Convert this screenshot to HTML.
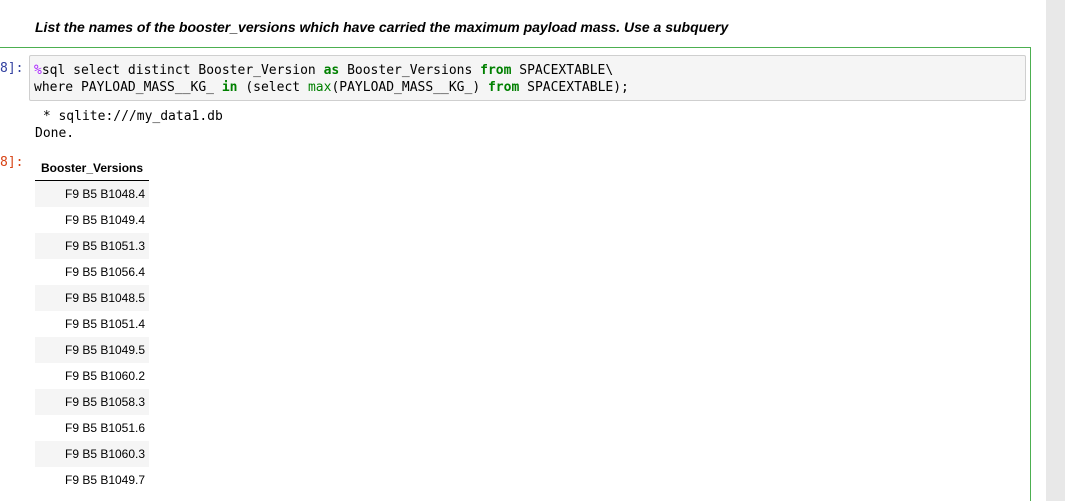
<!DOCTYPE html>
<html style="overflow:hidden;height:501px"><head><style>
body{margin:0;width:1065px;height:501px;overflow:hidden;background:#fff;font-family:"Liberation Sans",Arial,sans-serif;position:relative}
.sb{position:absolute;left:1046px;top:0;width:19px;height:501px;background:#e8e8e8}
.title{position:absolute;left:35px;top:19px;font-size:14px;font-weight:bold;font-style:italic;color:#000}
.gt{position:absolute;left:0;top:47px;width:1031px;height:1px;background:#4caf50}
.gr{position:absolute;left:1030px;top:47px;width:1px;height:454px;background:#4caf50}
.prompt{position:absolute;left:0;font-family:"DejaVu Sans Mono","Liberation Mono",monospace;font-size:13px}
.code{position:absolute;left:29px;top:55px;width:995px;height:44px;background:#f5f5f5;border:1px solid #cfcfcf;border-radius:2px}
.mono{font-family:"DejaVu Sans Mono","Liberation Mono",monospace;font-size:13px;white-space:pre;color:#000}
.k{color:#008000;font-weight:bold}.m{color:#aa22ff}.f{color:#008000}
table{position:absolute;left:35px;top:155px;border-collapse:collapse;font-size:12px}
th{font-weight:bold;padding:4px 6px;height:17px;border-bottom:1px solid #000;text-align:right}
td{height:26px;padding:0 4px 0 6px;text-align:right}
tr:nth-child(odd) td{background:#f5f5f5}
</style></head><body>
<div class="title">List the names of the booster_versions which have carried the maximum payload mass. Use a subquery</div>
<div class="gt"></div><div class="gr"></div>
<div class="prompt" style="top:61px;color:#303f9f">8]:</div>
<div class="code"><div class="mono" style="position:absolute;left:4px;top:6px;line-height:17px"><span class="m">%</span>sql select distinct Booster_Version <span class="k">as</span> Booster_Versions <span class="k">from</span> SPACEXTABLE\
where PAYLOAD_MASS__KG_ <span class="k">in</span> (select <span class="f">max</span>(PAYLOAD_MASS__KG_) <span class="k">from</span> SPACEXTABLE);</div></div>
<div class="mono" style="position:absolute;left:35px;top:108px;line-height:17px"> * sqlite:///my_data1.db
Done.</div>
<div class="prompt" style="top:155px;color:#d84315">8]:</div>
<table>
<thead><tr><th>Booster_Versions</th></tr></thead>
<tbody>
<tr><td>F9 B5 B1048.4</td></tr><tr><td>F9 B5 B1049.4</td></tr><tr><td>F9 B5 B1051.3</td></tr><tr><td>F9 B5 B1056.4</td></tr><tr><td>F9 B5 B1048.5</td></tr><tr><td>F9 B5 B1051.4</td></tr><tr><td>F9 B5 B1049.5</td></tr><tr><td>F9 B5 B1060.2</td></tr><tr><td>F9 B5 B1058.3</td></tr><tr><td>F9 B5 B1051.6</td></tr><tr><td>F9 B5 B1060.3</td></tr><tr><td>F9 B5 B1049.7</td></tr>
</tbody></table>
<div class="sb"></div>
</body></html>
